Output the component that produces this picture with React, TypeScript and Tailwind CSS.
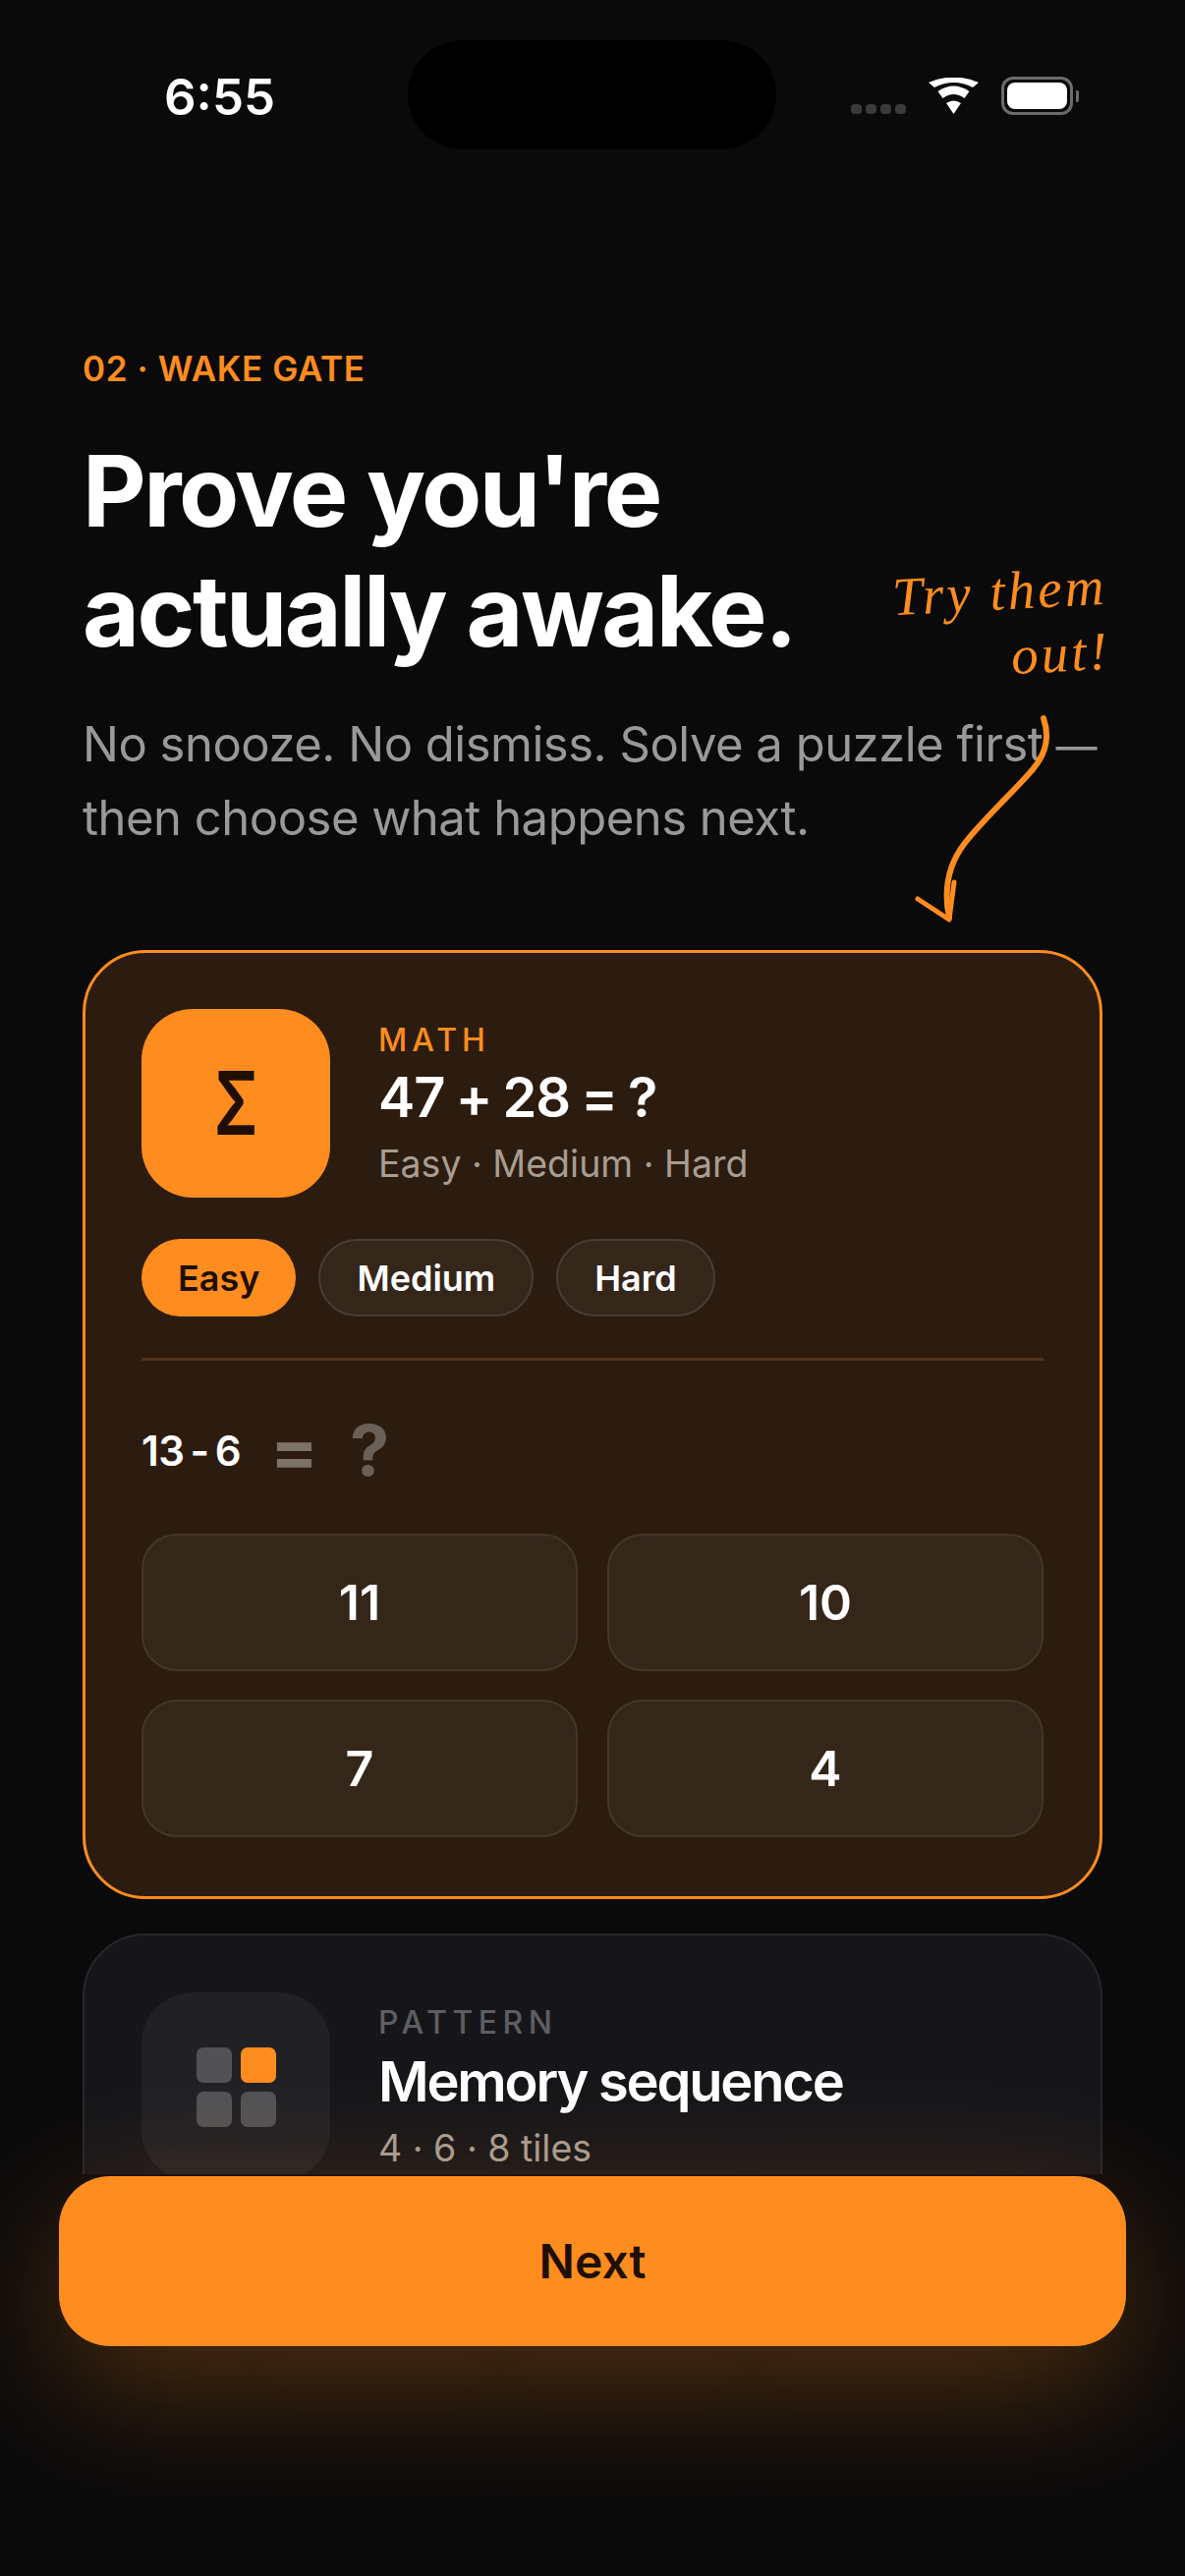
const inter = "font-['Inter',sans-serif]";

function StatusBar() {
  return (
    <div className="relative flex h-[193px] shrink-0 items-start justify-between">
      <span className="ml-[167px] mt-[72px] text-[51px] font-semibold leading-[54px] text-white">
        6:55
      </span>
      <div className="absolute left-[415px] top-[41px] h-[111px] w-[375px] rounded-[56px] bg-black" />
      <div className="mr-[114px] mt-[78px] flex items-start">
        <div className="mt-[28px] flex gap-[4px]">
          {[0, 1, 2, 3].map((dot) => (
            <div key={dot} className="h-[10px] w-[11px] rounded-[4px] bg-[#3a3a3a]" />
          ))}
        </div>
        <svg className="ml-[23px] mt-[1px]" width="51" height="37" viewBox="0 0 51 37" fill="#fff">
          <path d="M25.5 37 L18 26 Q25.5 21 33 26 Z" />
          <path d="M14.5 21 L9.5 14 Q25.5 3 41.5 14 L36.5 21 Q25.5 13 14.5 21 Z" />
          <path d="M6 10 L0 5 Q25.5 -6 51 5 L45 10 Q25.5 0 6 10 Z" />
        </svg>
        <div className="relative ml-[23px] flex h-[39px] w-[73px] items-center justify-center rounded-[12px] border-[3px] border-[#6b6b6b]">
          <div className="h-[27px] w-[61px] rounded-[8px] bg-white" />
          <div className="absolute -right-[9px] h-[12px] w-[3px] rounded-r-[2px] bg-[#6b6b6b]" />
        </div>
      </div>
    </div>
  );
}

function Pill({ label, active }: { label: string; active?: boolean }) {
  return (
    <div
      className={
        active
          ? "flex h-[79px] items-center rounded-[40px] bg-[#ff8c1f] px-[37px] text-[36px] font-semibold text-[#1f0f02]"
          : "flex h-[79px] items-center rounded-[40px] border-[2px] border-[#4a3c30] bg-[#35261a] px-[37px] text-[36px] font-semibold text-white"
      }
    >
      {label}
    </div>
  );
}

function Answer({ value }: { value: string }) {
  return (
    <div className="flex h-[140px] items-center justify-center rounded-[36px] border-[2px] border-[#453628] bg-[#35261a] text-[50px] font-semibold text-white">
      {value}
    </div>
  );
}

function MathCard() {
  return (
    <div className="h-[966px] rounded-[64px] border-[3px] border-[#ff8c1f] bg-[#2c1c0f] px-[57px] pt-[57px]">
      <div className="flex items-center gap-[49px]">
        <div className="flex h-[192px] w-[192px] shrink-0 items-center justify-center rounded-[52px] bg-[#ff8c1f] text-[90px] font-semibold leading-none text-[#1f0f02]">
          <span className="scale-x-[0.72]">Σ</span>
        </div>
        <div className="flex flex-col">
          <span className="text-[32px] font-medium leading-[40px] tracking-[5px] text-[#ff8c1f]">
            MATH
          </span>
          <span className="mt-[3px] text-[56px] font-semibold leading-[70px] tracking-[-1px] [word-spacing:-2px] text-white">
            47 + 28 = ?
          </span>
          <span className="mt-[10px] text-[37.5px] leading-[46px] text-[#a89d92]">
            Easy · Medium · Hard
          </span>
        </div>
      </div>
      <div className="mt-[42px] flex gap-[23px]">
        <Pill label="Easy" active />
        <Pill label="Medium" />
        <Pill label="Hard" />
      </div>
      <div className="mt-[42px] h-[3px] bg-[#4f3218]" />
      <div className="mt-[43px] flex h-[96px] items-center">
        <span className="text-[42px] font-semibold tracking-[-0.5px] [word-spacing:-4px] text-white">
          13 - 6
        </span>
        <span className="ml-[30px] text-[72px] font-bold text-[#7c7268]">=</span>
        <span className="ml-[32px] text-[72px] font-bold text-[#6b6057]">?</span>
      </div>
      <div className="mt-[37px] grid grid-cols-2 gap-x-[30px] gap-y-[29px]">
        <Answer value="11" />
        <Answer value="10" />
        <Answer value="7" />
        <Answer value="4" />
      </div>
    </div>
  );
}

function PatternCard() {
  return (
    <div className="mt-[35px] h-[600px] rounded-[64px] border-[2px] border-[#26262b] bg-[#16161a] px-[58px] pt-[58px]">
      <div className="flex items-center gap-[49px]">
        <div className="flex h-[192px] w-[192px] shrink-0 items-center justify-center rounded-[52px] bg-[#212125]">
          <div className="grid grid-cols-2 gap-[9px]">
            <div className="h-[36px] w-[36px] rounded-[7px] bg-[#525255]" />
            <div className="h-[36px] w-[36px] rounded-[7px] bg-[#ff8c1f]" />
            <div className="h-[36px] w-[36px] rounded-[7px] bg-[#525255]" />
            <div className="h-[36px] w-[36px] rounded-[7px] bg-[#525255]" />
          </div>
        </div>
        <div className="flex flex-col">
          <span className="text-[32px] font-medium leading-[40px] tracking-[5.5px] text-[#5e5e62]">
            PATTERN
          </span>
          <span className="mt-[5px] text-[56px] font-semibold leading-[70px] tracking-[-2.2px] text-white">
            Memory sequence
          </span>
          <span className="mt-[10px] text-[37.5px] leading-[46px] text-[#a89d92]">
            4 · 6 · 8 tiles
          </span>
        </div>
      </div>
    </div>
  );
}

function TryThemNote() {
  return (
    <>
      <div className="absolute left-[892px] top-[570px] w-[236px] -rotate-3 text-right font-['Liberation_Serif',serif] text-[55px] italic leading-[66px] tracking-[3px] text-[#ff8c1f]">
        Try them
        <br />
        out!
      </div>
      <svg
        className="absolute left-[920px] top-[720px]"
        width="160"
        height="230"
        viewBox="920 720 160 230"
        fill="none"
        stroke="#ff8c1f"
        strokeLinecap="round"
        strokeLinejoin="round"
      >
        <path d="M1062 731 C1070 755 1062 772 1045 790 C1025 812 1000 835 982 858 C965 880 960 905 966 934" strokeWidth="6" />
        <path d="M934 915 L966 936 L971 898" strokeWidth="5" />
      </svg>
    </>
  );
}

export default function App() {
  return (
    <div className={`relative flex h-[2622px] w-[1206px] flex-col overflow-hidden bg-[#0a0a0b] ${inter}`}>
      <StatusBar />
      <div className="flex h-[2020px] shrink-0 flex-col overflow-hidden px-[84px] pt-[160px]">
        <div className="text-[35px] font-semibold leading-[44px] tracking-[0.6px] text-[#ff8c1f]">
          02 · WAKE GATE
        </div>
        <h1 className="mt-[42px] self-start text-[100px] font-bold leading-[122px] tracking-[-2.5px] text-white">
          Prove you're
          <br />
          actually awake.
        </h1>
        <p className="mt-[38px] whitespace-nowrap text-[49px] leading-[73px] tracking-[-0.5px] text-[#999999]">
          No snooze. No dismiss. Solve a puzzle first <span className="text-[42px]">—</span>
          <br />
          then choose what happens next.
        </p>
        <div className="mt-[98px]">
          <MathCard />
          <PatternCard />
        </div>
      </div>
      <TryThemNote />
      <div className="relative mx-[60px] mt-[2px] flex h-[173px] items-center justify-center rounded-[52px] bg-[#ff8c1f] text-[48px] font-semibold text-[#1f0f02] shadow-[0_40px_140px_rgba(255,140,31,0.3)]">
        Next
      </div>
    </div>
  );
}
